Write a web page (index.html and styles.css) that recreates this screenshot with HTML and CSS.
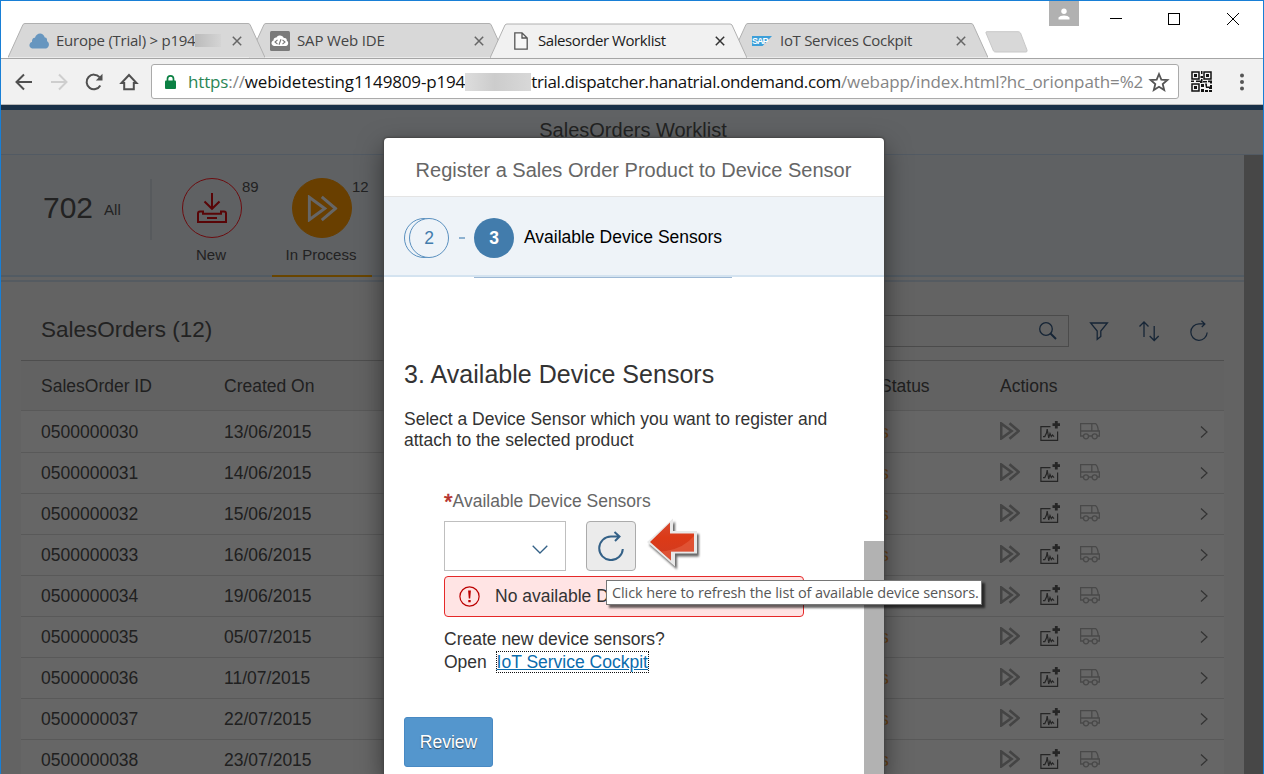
FILE: index.html
```html
<!DOCTYPE html>
<html lang="en">
<head>
<meta charset="utf-8">
<title>Salesorder Worklist</title>
<link rel="stylesheet" href="styles.css">
</head>
<body>
<svg class="sprite" width="0" height="0">
  <symbol id="tab-shape" viewBox="0 0 257 35"><path d="M0 34.5 L15 1.5 Q16 .5 17 .5 H240 Q241 .5 242 1.5 L257 34.5"/></symbol>
  <symbol id="x" viewBox="0 0 10 10"><path d="M.8 .8 9.2 9.2M9.2 .8 .8 9.2"/></symbol>
  <symbol id="forward" viewBox="0 0 20 18"><path d="M1.2 1.5V16.5L11.5 9ZM9.5 1.3 18.7 9 9.5 16.7"/></symbol>
  <symbol id="measure" viewBox="0 0 21 21"><path fill="none" stroke="currentColor" stroke-width="1.2" d="M10.5 5.6H.9V19.4H17.6V10.5M3 15.6H4.8L6.5 12 7.2 8 8.7 17 10 12.5 11.3 15.6 12.5 14 14 15.6"/><path fill="currentColor" d="M14.9 0h2.8v2.3H20v2.8h-2.3v2.4h-2.8V5.1h-2.4V2.3h2.4z"/></symbol>
  <symbol id="truck" viewBox="0 0 20 17"><path d="M3.5 13H.6V.6H11.8V8M.6 8H19.4V13H17.2M11.8 .6H15.5Q18 2.5 18.3 8M8.5 13H12.2"/><circle cx="6" cy="13.3" r="2.5"/><circle cx="14.7" cy="13.3" r="2.5"/></symbol>
  <symbol id="refresh" viewBox="0 0 26 30"><path d="M24.8 18A11.8 11.8 0 1 1 13 5.5H21M16.5 1 21.5 5.5 17 10"/></symbol>
</svg>
<div class="window">
  <div class="titlebar">
    <div class="tabs">
      <div class="tab t1"><svg class="shape"><use href="#tab-shape"/></svg>
        <svg class="fav" viewBox="0 0 20 16"><path fill="#6796bf" d="M3 15.500C-.8 14 .1 9.500 3 9 2.700 6 4.500 4.500 6 4.800 7 0 14-1.500 15.800 4.500 18 4.500 18.300 6.500 18 8.300 20.800 9.500 20.700 14.500 17 15.500Z"/></svg>
        <span class="label">Europe (Trial) &gt; p194<i class="smudge"></i></span><svg class="close"><use href="#x"/></svg></div>
      <div class="tab t2"><svg class="shape"><use href="#tab-shape"/></svg>
        <svg class="fav" viewBox="0 0 20 20"><rect width="20" height="20" rx="1.500" fill="#7a7a7a"/><path fill="#fff" d="M4 15C.5 14 1 10 3.500 9.500 3.500 7 5 6.300 6.500 6.500 8 3.500 13 4 13.800 7 16 6.500 17 8 16.800 9.700 19 11 18.500 14.500 16 15Z"/><path fill="none" stroke="#777" stroke-width="1.100" d="M7.500 8.800 5 11 7.500 13.200M12.500 8.800 15 11 12.500 13.200M11 8.300 9 13.700"/></svg>
        <span class="label">SAP Web IDE</span><svg class="close"><use href="#x"/></svg></div>
      <div class="tab t3 active"><svg class="shape"><use href="#tab-shape"/></svg>
        <svg class="fav doc" viewBox="0 0 14 18"><path fill="#f7f7f7" stroke="#555" stroke-width="1.300" d="M.8 .8H8L13.200 6V17.200H.8ZM8 .8V6H13.200"/></svg>
        <span class="label">Salesorder Worklist</span><svg class="close"><use href="#x"/></svg></div>
      <div class="tab t4"><svg class="shape"><use href="#tab-shape"/></svg>
        <span class="fav sap"><svg viewBox="0 0 20 10"><path fill="#3d9fd9" d="M0 0H20L10.500 10H0Z"/></svg><b>SAP</b></span>
        <span class="label">IoT Services Cockpit</span><svg class="close"><use href="#x"/></svg></div>
    </div>
    <svg class="newtab" viewBox="0 0 44 22"><path fill="#d8d8d8" stroke="#c8c8c8" d="M1 2Q.5 .7 2 .7H33Q34.500 .7 35.500 2L42 19Q42.500 21 41 21H11Q9 21 8.500 20Z"/></svg>
    <div class="controls">
      <span class="user"><svg width="12" height="11" viewBox="0 0 12 11"><circle cx="6" cy="2.700" r="2.700" fill="#fff"/><path fill="#fff" d="M.5 11V9Q2 7 6 7T11.500 9V11Z"/></svg></span>
      <svg class="min" viewBox="0 0 12 12"><path d="M0 6.500H12"/></svg>
      <svg class="max" viewBox="0 0 12 12"><rect x=".5" y=".5" width="11" height="11"/></svg>
      <svg class="quit" viewBox="0 0 12 12"><path d="M0 0 12 12M12 0 0 12"/></svg>
    </div>
  </div>
  <div class="toolbar">
    <svg class="nav" viewBox="0 0 18 18"><path d="M17 9H2M9 1.500 1.500 9 9 16.500"/></svg>
    <svg class="nav off" viewBox="0 0 18 18"><path d="M1 9H16M9 1.500 16.500 9 9 16.500"/></svg>
    <svg class="nav" viewBox="0 0 18 18"><path d="M15.300 12.500A7.300 7.300 0 1 1 14.500 4.200"/><path class="solid" d="M17.500 .8V7.500H10.800Z"/></svg>
    <svg class="nav" viewBox="0 0 18 18"><path d="M1.500 10 9 2 16.500 10H13.800V16.300H4.200V10Z"/></svg>
    <div class="address">
      <svg class="lock" viewBox="0 0 11 14"><rect y="5.500" width="11" height="8.500" rx="1" fill="#0b8043"/><path fill="none" stroke="#0b8043" stroke-width="1.700" d="M2.500 6V3.800A3 3 0 0 1 8.500 3.800V6"/></svg>
      <span class="url"><span class="u1"><em>https</em><s>://</s>webidetesting1149809-p194</span><i class="smudge"></i><span class="u2">trial.dispatcher.hanatrial.ondemand.com</span><s class="u3">/webapp/index.html?hc_orionpath=%2</s></span>
      <svg class="star" viewBox="0 0 20 20"><path d="M10 2 12.300 7.600 18.400 8 13.700 12 15.200 18 10 14.700 4.800 18 6.300 12 1.600 8 7.700 7.600Z"/></svg>
    </div>
    <svg class="qr" viewBox="0 0 21 21"><path fill="none" stroke="#111" stroke-width="1.500" d="M1 1H8V8H1ZM13 1H20V8H13ZM1 13H8V20H1Z"/><path fill="#111" d="M3 3h3v3H3zM15 3h3v3h-3zM3 15h3v3H3zM10 0h1.500v3H10zM9.500 5H12v2H9.500zM0 9.500h3v1.500H0zM5 9.500h5V8h1.500v4H9v-1H5zM12 10h4v1.500h-4zM17 9.500h4v3h-2v-1.300h-2zM10 13h3v3h-3zM14 12.500h2v3h3V14h2v4h-3v-1h-3zM10 18h3v3h-3zM14 19h3v2h-3zM18 19h3v2h-3z"/></svg>
    <svg class="dots" viewBox="0 0 4 18"><circle cx="2" cy="2.500" r="2"/><circle cx="2" cy="9" r="2"/><circle cx="2" cy="15.500" r="2"/></svg>
  </div>
  <main class="app">
    <header class="shell">SalesOrders Worklist</header>
    <div class="scroller">
      <div class="content">
        <nav class="filters">
          <div class="all"><span class="big">702</span><span class="small">All</span></div>
          <div class="filter"><span class="ring"><svg width="30" height="30" viewBox="0 0 30 30"><path d="M15 0V15M7.500 8.500 15 15.800 22.500 8.500M3 18.500H6V20.800H24V18.500H27Q29 18.500 29 20.500V29H1V20.500Q1 18.500 3 18.500M10 25H20"/></svg></span><sup>89</sup><p>New</p></div>
          <div class="filter on"><span class="ring"><svg width="31" height="27" viewBox="0 0 20 18"><use href="#forward"/></svg></span><sup>12</sup><p>In Process</p></div>
        </nav>
        <section class="list">
          <div class="listbar"><h2>SalesOrders (12)</h2>
            <div class="search"><svg width="18" height="18" viewBox="0 0 18 18"><circle cx="7" cy="7" r="6.300"/><path stroke-width="2" d="M11.500 11.500 17 17"/></svg></div>
            <svg class="tool" viewBox="0 0 18 18"><path d="M.6 1H17.400L10.800 9V14.500L7.200 17.300V9Z"/></svg>
            <svg class="tool wide" viewBox="0 0 20 20"><path d="M5 16V1M.5 5.500 5 1 9.500 5.500M15.200 5V19.500M10.700 15 15.200 19.500 19.700 15"/></svg>
            <svg class="tool re" viewBox="0 0 26 30"><use href="#refresh"/></svg>
          </div>
          <div class="row head"><span>SalesOrder ID</span><span>Created On</span><span>Status</span><span>Actions</span></div>
          <div id="rows"></div>
        </section>
      </div>
      <div class="pagebar"></div>
    </div>
    <div class="dialog">
      <h1>Register a Sales Order Product to Device Sensor</h1>
      <div class="steps"><span class="stack"><i></i><b>2</b></span><span class="dash"></span><b class="current">3</b><span class="name">Available Device Sensors</span></div>
      <div class="body">
        <div class="progress"></div>
        <h3>3. Available Device Sensors</h3>
        <p class="intro">Select a Device Sensor which you want to register and<br>attach to the selected product</p>
        <div class="form">
          <label><span class="req">*</span>Available Device Sensors</label>
          <div class="controls-row">
            <div class="select"><svg width="16" height="9" viewBox="0 0 16 9"><path d="M.7 .7 8 8 15.300 .7"/></svg></div>
            <button class="reload"><svg width="26" height="30"><use href="#refresh"/></svg></button>
            <svg class="arrow" width="54" height="54" viewBox="0 0 54 54">
              <defs><linearGradient id="red" x2="0" y2="1"><stop offset="0" stop-color="#d6492f"/><stop offset=".4" stop-color="#dc3a17"/><stop offset="1" stop-color="#cf3b22"/></linearGradient></defs>
              <path class="edge" d="M1 25 27 1.500V14H51V36.500H29V49.500Z"/><path fill="url(#red)" d="M4 25 24 5.500V16.500H48V34.500H25V43.500Z"/><path fill="#e8694b" opacity=".5" d="M20 34Q38 31 48 19V34.500H25V43.500L15 34.500Z"/></svg>
          </div>
          <div class="error"><svg width="21" height="21" viewBox="0 0 21 21"><circle cx="10.500" cy="10.500" r="9.600"/><path d="M9.100 4.500H11.900L11.200 12.500H9.800ZM9.300 14H11.700V16.200H9.300Z"/></svg>No available D</div>
          <p class="help">Create new device sensors?<br>Open&nbsp; <a>IoT Service Cockpit</a></p>
        </div>
        <button class="review">Review</button>
        <div class="thumb"></div>
      </div>
    </div>
    <div class="tooltip">Click here to refresh the list of available device sensors.</div>
  </main>
</div>
<script src="rows.js"></script>
</body>
</html>
```
FILE: rows.js
```js
const orders = [
  ["0500000030", "13/06/2015"], ["0500000031", "14/06/2015"], ["0500000032", "15/06/2015"],
  ["0500000033", "16/06/2015"], ["0500000034", "19/06/2015"], ["0500000035", "05/07/2015"],
  ["0500000036", "11/07/2015"], ["0500000037", "22/07/2015"], ["0500000038", "23/07/2015"]
];
document.getElementById("rows").innerHTML = orders.map(([id, date]) => `
  <div class="row"><span>${id}</span><span>${date}</span><span class="state">s</span>
    <span class="actions"><svg class="fw"><use href="#forward"/></svg><svg class="ms"><use href="#measure"/></svg><svg class="tr"><use href="#truck"/></svg></span>
    <svg class="go" viewBox="0 0 8 12"><path d="M1 .5 7 6 1 11.500"/></svg></div>`).join("");
```
FILE: styles.css
```css
* { box-sizing: border-box; }
body { margin: 0; font: 17.5px/21px "Liberation Sans", Arial, sans-serif; overflow: hidden; }
h1, h2, h3, p { margin: 0; font-weight: normal; }
svg { flex: none; fill: none; overflow: visible; }
.sprite { position: absolute; }
.window { width: 1264px; height: 774px; overflow: hidden; border: 1px solid #187fd6; border-bottom: 0; display: flex; flex-direction: column; background: #fff; }

.titlebar { height: 58px; flex: none; display: flex; padding: 22px 0 0 7px; border-bottom: 1px solid #a5a5a5; font-family: "Open Sans", sans-serif; }
.tabs { display: flex; }
.tab { position: relative; isolation: isolate; width: 257px; height: 35px; margin-right: -16px; padding: 0 22px 0 21px; display: flex; align-items: center; font-size: 15px; color: #444; }
.t1 { z-index: 4; padding-right: 23px; }
.t2 { z-index: 3; }
.t4 { z-index: 2; }
.tab.active { z-index: 6; color: #1b1b1b; height: 36px; padding-bottom: 1px; }
.shape { position: absolute; inset: 0; width: 257px; height: 35px; fill: #d8d8d8; stroke: #b0b0b0; z-index: -1; }
.active .shape { fill: #f1f1f1; height: 36px; }
.fav { width: 20px; height: 20px; margin-right: 7px; }
.t1 .fav { height: 16px; }
.fav.doc { width: 14px; height: 18px; margin: 0 10px 0 3px; }
.fav.sap { display: grid; width: 20px; height: 10px; margin-right: 8px; }
.sap svg, .sap b { grid-area: 1 / 1; }
.sap b { color: #fff; font: bold 9px/10px "Liberation Sans", sans-serif; letter-spacing: -1px; }
.label { display: flex; align-items: center; flex: 1; white-space: nowrap; letter-spacing: -.15px; }
.t1 .label { letter-spacing: -.25px; }
.t3 .label { letter-spacing: -.42px; }
.t4 .label { letter-spacing: -.3px; }
.tab .close { width: 10px; height: 10px; stroke: #666; stroke-width: 1.5; }
.active .close { stroke: #333; }
.smudge { width: 26px; height: 13px; background: linear-gradient(90deg, #bbb, #d4d4d4); }
.newtab { width: 44px; height: 22px; margin: 8px 0 0 13px; }
.controls { display: flex; flex: 1; margin: -22px 22px 0 20px; height: 36px; fill: none; stroke: #000; }
.controls svg { width: 12px; height: 12px; }
.user { width: 30px; height: 25px; background: #b1b1b1; display: grid; place-items: center; stroke: none; }
.controls svg.min { margin: 11px 0 0 31px; }
.controls svg.max { margin: 12px 0 0 46px; }
.controls svg.quit { margin: 12px 0 0 47px; }

.toolbar { height: 46px; flex: none; display: flex; align-items: center; background: #f1f1f1; border-bottom: 1px solid #b9b9b9; padding-left: 14px; }
.nav { width: 18px; height: 18px; margin-right: 17px; stroke: #505050; stroke-width: 2; }
.nav .solid { fill: #505050; stroke: none; }
.nav.off { stroke: #cecece; }
.address { width: 1028px; height: 35px; margin-left: -4px; border: 1px solid #aaa; border-radius: 3px; background: #fff; display: flex; align-items: center; padding-left: 13px; }
.lock { width: 11px; height: 14px; margin-right: 12px; }
.url { width: 955px; display: flex; align-items: center; white-space: nowrap; font: 17px/30px "Open Sans", sans-serif; color: #111; }
.url em { font-style: normal; color: #2b8655; }
.url s { text-decoration: none; color: #858585; }
.url .smudge { flex: none; width: 66px; height: 18px; background: linear-gradient(90deg, #ddd, #ccc 45%, #d8d8d8); }
.u1, .u2, .u3 { flex: none; }
.u1 { letter-spacing: -.15px; }
.u2 { letter-spacing: -.37px; }
.u3 { letter-spacing: -.1px; }
.star { width: 20px; height: 20px; margin-left: 6px; stroke: #555; stroke-width: 1.8; }
.qr { width: 21px; height: 21px; margin-left: 12px; }
.dots { width: 4px; height: 18px; margin-left: 28px; fill: #555; }

.app { position: relative; flex: 1; min-height: 0; border-top: 5px solid #1a3148; background: #636363; display: flex; flex-direction: column; color: #222; }
.shell { height: 45px; flex: none; background: #606264; border-bottom: 1px solid #525a63; text-align: center; font-size: 20px; line-height: 40px; padding-left: 2px; }
.scroller { flex: 1; min-height: 0; display: flex; }
.content { flex: 1; }
.pagebar { width: 19px; background: #474747; }
.filters { height: 122px; background: #5f6163; border-bottom: 2px solid #525b63; display: flex; font-size: 15px; line-height: 18px; }
.all { width: 151px; height: 61px; margin-top: 24px; padding-left: 42px; border-right: 2px solid #575a5d; display: flex; align-items: center; gap: 11px; }
.big { font-size: 30px; padding-bottom: 4px; }
.filter { width: 100px; margin-left: 10px; padding: 23px 0 0 20px; display: grid; grid-template-columns: 60px 20px; grid-template-rows: 60px 1fr; }
.filter sup { font-size: 15px; line-height: 18px; }
.filter p { grid-column: 1 / 3; width: 98px; margin: 8px 0 0 -20px; text-align: center; }
.ring { width: 60px; height: 60px; border: 1px solid #6c0d10; border-radius: 50%; display: grid; place-items: center; stroke: #590507; stroke-width: 2; }
.on { border-bottom: 2px solid #694500; height: 122px; }
.on .ring { background: #693f00; border-color: #693f00; stroke: #666; stroke-width: 2; }
.list { margin-top: 3px; border-top: 2px solid #555b61; padding: 33px 20px 0; }
.listbar { height: 32px; display: flex; align-items: center; padding-left: 20px; stroke: #162536; stroke-width: 1.3; }
.listbar h2 { font-size: 22.5px; width: 400px; line-height: 28px; margin-top: -2px; }
.search { width: 628px; height: 32px; border: 1px solid #4b4b4b; display: flex; align-items: center; justify-content: flex-end; padding-right: 11px; }
.tool { width: 18px; height: 18px; margin-left: 21px; }
.tool.wide { width: 20px; height: 20px; margin-left: 31px; }
.tool.re { width: 18px; height: 21px; margin: -1px 0 0 31px; stroke-width: 1.8; }
.row { height: 41px; background: #666; border-bottom: 1px solid #595959; display: grid; grid-template-columns: 183px 656px 120px 200px 1fr; align-items: center; padding-left: 20px; color: #202020; }
.row.head { margin-top: 13px; height: 51px; background: #626262; border-top: 1px solid #4e4e4e; padding-top: 2px; }
#rows .row:first-child { height: 42px; padding-top: 1px; }
.state { color: #69400f; }
.actions { display: flex; align-items: center; gap: 20px; margin-top: -2px; }
.fw { width: 20px; height: 18px; stroke: #444; stroke-width: 2.6; }
.ms { width: 21px; height: 21px; color: #262626; }
.tr { width: 20px; height: 17px; stroke: #494949; stroke-width: 1.3; margin: 1px 0 0 -1px; }
.go { width: 8px; height: 12px; stroke: #333; stroke-width: 1.2; justify-self: start; }

.dialog { position: absolute; left: 383px; top: 28px; width: 500px; bottom: -1px; background: #fff; border-radius: 4px 4px 0 0; box-shadow: 0 0 2px 1px #444, 0 10px 26px rgba(0, 0, 0, .5); display: flex; flex-direction: column; color: #333; }
.dialog h1 { height: 59px; flex: none; font-size: 20px; line-height: 64px; color: #666; text-align: center; border-bottom: 1px solid #e4e4e4; padding-right: 1px; }
.steps { height: 80px; flex: none; display: flex; align-items: center; padding: 3px 0 0 20px; background: #eef3f8; border-bottom: 2px solid #d4e3f0; color: #000; }
.stack { width: 45px; height: 40px; display: grid; }
.stack i, .stack b { grid-area: 1 / 1; width: 40px; height: 40px; border: 1px solid #5a90bf; border-radius: 50%; }
.stack b { justify-self: end; background: #eef3f8; font-weight: normal; color: #427cac; display: grid; place-items: center; padding-top: 1px; }
.dash { width: 6px; height: 2px; background: #8db1d0; margin: 0 9px 0 10px; }
.current { width: 40px; height: 40px; border-radius: 50%; background: #427cac; color: #fff; display: grid; place-items: center; margin-right: 10px; padding-top: 1px; }
.body { position: relative; flex: 1; min-height: 0; padding-left: 20px; display: flex; flex-direction: column; align-items: flex-start; }
.progress { width: 258px; height: 1px; margin-left: 70px; background: #9eb9d5; flex: none; }
.body h3 { font-size: 25px; line-height: 30px; margin-top: 81px; letter-spacing: .03px; }
.intro { margin-top: 20px; }
.form { margin: 39px 0 0 40px; }
.form label { display: flex; color: #666; height: 22px; line-height: 23px; }
.req { color: #b5302b; font-size: 22px; -webkit-text-stroke: .6px #b5302b; }
.controls-row { display: flex; align-items: center; margin-top: 9px; height: 50px; }
.select { width: 122px; height: 50px; border: 1px solid #bfbfbf; display: flex; align-items: center; justify-content: flex-end; padding: 6px 17px 0 0; stroke: #346187; stroke-width: 1.3; }
.reload { width: 50px; height: 50px; margin-left: 20px; border: 1px solid #ababab; border-radius: 4px; background: #ebebeb; padding: 0; display: grid; place-items: center; stroke: #346187; stroke-width: 2; }
.arrow { margin: -4px 0 0 10px; }
.edge { fill: #e9e9e9; filter: drop-shadow(2px 3px 1px #666); }
.error { width: 360px; height: 41px; margin-top: 5px; border: 1px solid #e52929; border-radius: 4px; background: #ffe4e4; display: flex; align-items: center; gap: 15px; padding-left: 14px; }
.error circle { stroke: #bb0000; stroke-width: 1.2; }
.error path { fill: #bb0000; }
.help { margin-top: 11px; line-height: 23px; }
.help a { color: #0a6cad; text-decoration: underline; outline: 1px dotted #111; }
.review { width: 89px; height: 50px; margin-top: 43px; flex: none; border: 1px solid #4889c3; border-radius: 3px; background: #5496cd; color: #fff; font: inherit; text-shadow: 0 1px 1px #345; padding: 0; }
.thumb { position: absolute; right: 0; top: 264px; bottom: 0; width: 20px; background: #b2b2b2; }
.tooltip { position: absolute; left: 605px; top: 470px; width: 376px; height: 25px; border: 1px solid #767676; background: #fff; box-shadow: 3px 3px 2px rgba(0, 0, 0, .6); color: #575757; font: 14.5px/23px "Open Sans", sans-serif; letter-spacing: -.1px; padding-left: 5px; white-space: nowrap; }
```
